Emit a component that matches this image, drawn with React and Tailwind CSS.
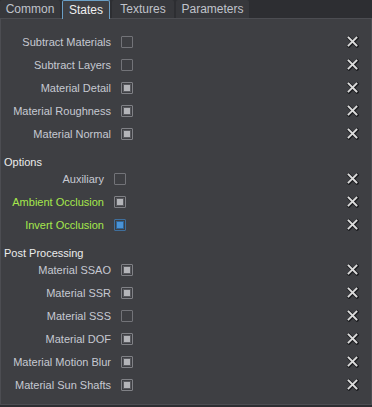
const GROUPS = [
  {
    title: null,
    labelWidth: 'w-[110px]',
    rows: [
      { label: 'Subtract Materials', state: 'off' },
      { label: 'Subtract Layers', state: 'off' },
      { label: 'Material Detail', state: 'on' },
      { label: 'Material Roughness', state: 'on' },
      { label: 'Material Normal', state: 'on' },
    ],
  },
  {
    title: 'Options',
    labelWidth: 'w-[103px]',
    rows: [
      { label: 'Auxiliary', state: 'off' },
      { label: 'Ambient Occlusion', state: 'on', green: true },
      { label: 'Invert Occlusion', state: 'blue', green: true },
    ],
  },
  {
    title: 'Post Processing',
    labelWidth: 'w-[110px]',
    rows: [
      { label: 'Material SSAO', state: 'on' },
      { label: 'Material SSR', state: 'on' },
      { label: 'Material SSS', state: 'off' },
      { label: 'Material DOF', state: 'on' },
      { label: 'Material Motion Blur', state: 'on' },
      { label: 'Material Sun Shafts', state: 'on' },
    ],
  },
]

const TABS = [
  { name: 'Common', w: 'w-[60px]' },
  { name: 'States', w: 'w-[48px]', active: true },
  { name: 'Textures', w: 'w-[62px]' },
  { name: 'Parameters', w: 'w-[73px]' },
]

function Check({ state }) {
  if (state === 'off') {
    return <div className="w-[12px] h-[12px] border border-[#727378] rounded-[1px]" />
  }
  if (state === 'blue') {
    return (
      <div className="w-[12px] h-[12px] border border-[#3f6f9c] rounded-[1px] p-[1px]">
        <div className="w-full h-full bg-[#4a93d6] border border-[#2f6394]" />
      </div>
    )
  }
  return (
    <div className="w-[12px] h-[12px] border border-[#808186] rounded-[1px] p-[1px]">
      <div className="w-full h-full bg-[#b4b5b9] border border-[#5a5b60]" />
    </div>
  )
}

function CloseX() {
  return (
    <svg width="13" height="13" viewBox="0 0 13 13">
      <path d="M2.5 2.5 L10.5 10.5 M10.5 2.5 L2.5 10.5" stroke="#1c1d20" strokeWidth="3.4" strokeLinecap="square" transform="translate(0.5 0.5)" />
      <path d="M2.5 2.5 L10.5 10.5 M10.5 2.5 L2.5 10.5" stroke="#dcdcdc" strokeWidth="1.8" strokeLinecap="square" />
    </svg>
  )
}

export default function App() {
  return (
    <div
      className="w-[372px] h-[407px] bg-[#2d2e32] flex flex-col text-[11px] overflow-hidden"
      style={{ fontFamily: '"Liberation Sans", Arial, sans-serif' }}
    >
      {/* tabs */}
      <div className="h-[18px] flex gap-[2px] shrink-0">
        {TABS.map((t) => (
          <div
            key={t.name}
            className={[
              'flex items-center justify-center leading-none text-[12px]',
              t.w,
              t.active
                ? 'bg-[#3e3f43] text-[#f0f0f0] border-t border-x border-[#6a9fc6] rounded-t-[2px] relative z-10 h-[19px]'
                : 'h-[18px] bg-[#37383c] text-[#c0c3cb] rounded-t-[2px]',
            ].join(' ')}
          >
            {t.name}
          </div>
        ))}
      </div>

      {/* panel */}
      <div className="flex-1 bg-[#3e3f43] border border-[#4c4d52] mb-[2px] pt-[11px]">
        {GROUPS.map((g, gi) => (
          <div key={gi}>
            {g.title && (
              <div className="h-[22px] pt-[11px] pl-[3px] leading-[13px] text-[#ececec]">{g.title}</div>
            )}
            {g.rows.map((r) => (
              <div key={r.label} className="h-[23px] flex items-center">
                <div
                  className={[
                    'text-right shrink-0 whitespace-nowrap pt-[1px]',
                    g.labelWidth,
                    r.green ? 'text-[#a6e84c]' : 'text-[#c6c9d2]',
                  ].join(' ')}
                >
                  {r.label}
                </div>
                <div className="ml-[10px]">
                  <Check state={r.state} />
                </div>
                <div className="ml-auto mr-[12px] flex items-center">
                  <CloseX />
                </div>
              </div>
            ))}
          </div>
        ))}
      </div>
    </div>
  )
}
